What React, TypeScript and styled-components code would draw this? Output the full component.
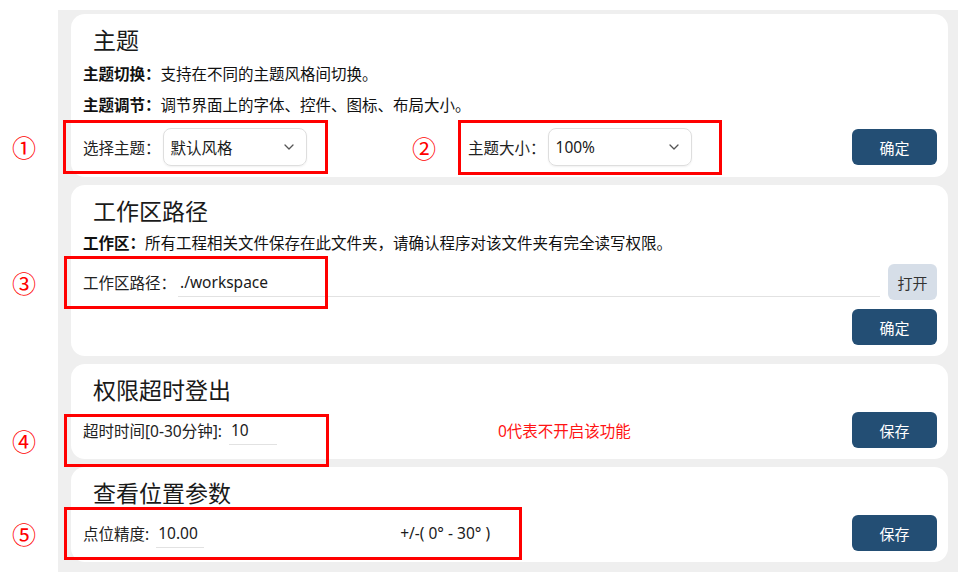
import React from 'react';
import styled, { createGlobalStyle } from 'styled-components';

const GlobalStyle = createGlobalStyle`
  body {
    margin: 0;
    background: #fff;
    font-family: "Noto Sans", "Noto Sans CJK SC", sans-serif;
    color: #222;
  }
`

const Page = styled.div`
  padding: 10px 8px 15px 58px;
`

const Panel = styled.div`
  width: 900px;
  box-sizing: border-box;
  background: #efefef;
  padding: 4px 10px 10px 13px;
  display: flex;
  flex-direction: column;
  gap: 8px;
`

const Card = styled.section`
  background: #fff;
  border-radius: 14px;
  padding: 10px 11px 11px 12px;
  display: flex;
  flex-direction: column;
`

const Title = styled.h2`
  margin: 0;
  padding-left: 10px;
  font-size: 23px;
  font-weight: 400;
  line-height: 32px;
  color: #1a1a1a;
`

const Desc = styled.p<{ $mt: number }>`
  margin: ${p => p.$mt}px 0 0;
  font-size: 15.5px;
  line-height: 24px;
  color: #111;
  b { font-weight: 700; }
`

const Row = styled.div<{ $mt: number; $h?: number }>`
  position: relative;
  margin-top: ${p => p.$mt}px;
  min-height: ${p => p.$h || 36}px;
  display: flex;
  align-items: center;
`

const ThemeRow = styled(Row)`
  display: grid;
  grid-template-columns: 385px 1fr auto;
`

const Field = styled.div`
  display: flex;
  align-items: center;
`

const Label = styled.span`
  font-size: 15.5px;
  color: #222;
  white-space: nowrap;
`

const SelectBox = styled.div<{ $w: number }>`
  width: ${p => p.$w}px;
  height: 38px;
  margin-left: 2px;
  box-sizing: border-box;
  border: 1px solid #dedede;
  border-radius: 8px;
  box-shadow: 0 1px 2px rgba(0, 0, 0, 0.06);
  padding: 0 12px 0 7px;
  display: flex;
  align-items: center;
  justify-content: space-between;
  font-size: 15.5px;
  color: #1a1a1a;
`

const LineInput = styled.input<{ $w?: number }>`
  ${p => (p.$w ? `width: ${p.$w}px;` : 'flex: 1; min-width: 0;')}
  height: 30px;
  box-sizing: border-box;
  border: none;
  border-bottom: 1px solid #e2e2e2;
  padding: 0 2px;
  margin-left: ${p => (p.$w ? 7 : 2)}px;
  background: transparent;
  font: inherit;
  font-size: 15.5px;
  color: #1a1a1a;
  outline: none;
`

const Hint = styled.span<{ $ml: number; $red?: boolean }>`
  margin-left: ${p => p.$ml}px;
  font-size: 15.5px;
  color: ${p => (p.$red ? '#ff1414' : '#1a1a1a')};
  white-space: nowrap;
`

const Button = styled.button`
  width: 85px;
  height: 36px;
  margin-left: auto;
  border: none;
  border-radius: 6px;
  background: #234e74;
  color: #fff;
  font-family: inherit;
  font-size: 15px;
  cursor: pointer;
`

const OpenButton = styled.button`
  width: 49px;
  height: 36px;
  margin-left: 8px;
  border: none;
  border-radius: 6px;
  background: #d6dee8;
  color: #333;
  font-family: inherit;
  font-size: 15px;
`

const Footer = styled.div`
  margin-top: 9px;
  display: flex;
  justify-content: flex-end;
`

// red annotation frames drawn over the screenshot
const Mark = styled.div<{ $x: number; $y: number; $w: number; $h: number }>`
  position: absolute;
  left: ${p => p.$x}px;
  top: ${p => p.$y}px;
  width: ${p => p.$w}px;
  height: ${p => p.$h}px;
  box-sizing: border-box;
  border: 3px solid #ff0000;
  pointer-events: none;
`

const Badge = styled.span<{ $gap: number }>`
  position: absolute;
  right: calc(100% + ${p => p.$gap}px);
  top: 50%;
  transform: translateY(-50%);
  font-family: "Noto Sans CJK SC", sans-serif;
  font-size: 24px;
  line-height: 1;
  color: #ff0000;
`

const Chevron = () => (
  <svg width="10" height="6" viewBox="0 0 10 6">
    <path d="M1 1l4 4 4-4" fill="none" stroke="#555" strokeWidth="1.3" strokeLinecap="round" strokeLinejoin="round" />
  </svg>
)

function App() {
  return <Page>
    <GlobalStyle />
    <Panel>
      <Card>
        <Title>主题</Title>
        <Desc $mt={6}><b>主题切换：</b>支持在不同的主题风格间切换。</Desc>
        <Desc $mt={7}><b>主题调节：</b>调节界面上的字体、控件、图标、布局大小。</Desc>
        <ThemeRow $mt={11} $h={38}>
          <Field>
            <Label>选择主题：</Label>
            <SelectBox $w={144}>默认风格<Chevron /></SelectBox>
          </Field>
          <Field>
            <Label>主题大小：</Label>
            <SelectBox $w={144}>100%<Chevron /></SelectBox>
          </Field>
          <Button>确定</Button>
          <Mark $x={-20} $y={-8} $w={265} $h={54}><Badge $gap={30}>①</Badge></Mark>
          <Mark $x={375} $y={-8} $w={264} $h={55}><Badge $gap={25}>②</Badge></Mark>
        </ThemeRow>
      </Card>

      <Card>
        <Title>工作区路径</Title>
        <Desc $mt={4}><b>工作区：</b>所有工程相关文件保存在此文件夹，请确认程序对该文件夹有完全读写权限。</Desc>
        <Row $mt={9}>
          <Label>工作区路径：</Label>
          <LineInput readOnly defaultValue="./workspace" />
          <OpenButton>打开</OpenButton>
          <Mark $x={-19} $y={-8} $w={264} $h={53}><Badge $gap={31}>③</Badge></Mark>
        </Row>
        <Footer><Button>确定</Button></Footer>
      </Card>

      <Card>
        <Title>权限超时登出</Title>
        <Row $mt={6}>
          <Label>超时时间[0-30分钟]:</Label>
          <LineInput $w={48} readOnly defaultValue="10" />
          <Hint $ml={221} $red>0代表不开启该功能</Hint>
          <Button>保存</Button>
          <Mark $x={-19} $y={2} $w={265} $h={53}><Badge $gap={31}>④</Badge></Mark>
        </Row>
      </Card>

      <Card>
        <Title>查看位置参数</Title>
        <Row $mt={6}>
          <Label>点位精度:</Label>
          <LineInput $w={48} readOnly defaultValue="10.00" />
          <Hint $ml={196}>+/-( 0° - 30° )</Hint>
          <Button>保存</Button>
          <Mark $x={-19} $y={-8} $w={458} $h={53}><Badge $gap={31}>⑤</Badge></Mark>
        </Row>
      </Card>
    </Panel>
  </Page>
}

export default App;
